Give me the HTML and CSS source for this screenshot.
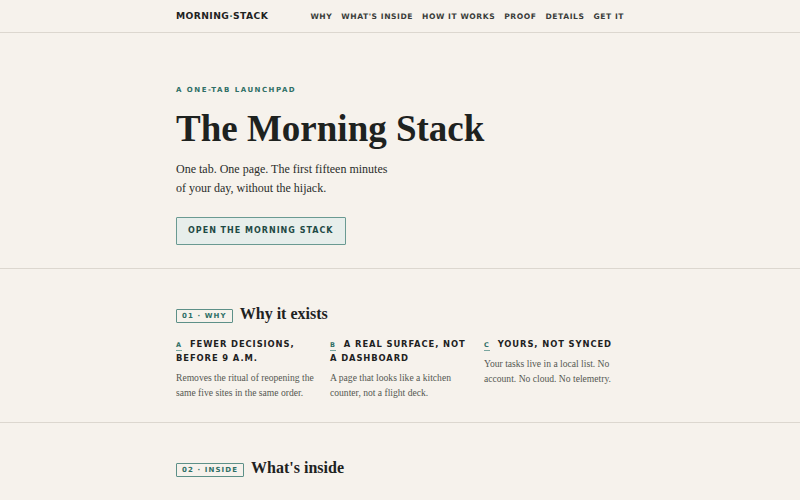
FILE: index.html
```html
<!DOCTYPE html>
<html lang="en">
<head>
    <meta charset="UTF-8">
    <title>The Morning Stack</title>
    <link rel="stylesheet" href="styles.css">
</head>
<body>
    <header class="topbar">
        <div class="wrap topbar-inner">
            <div class="logo">MORNING<span class="dot">·</span>STACK</div>
            <nav class="nav">
                <a href="#why">WHY</a>
                <a href="#inside">WHAT'S INSIDE</a>
                <a href="#how">HOW IT WORKS</a>
                <a href="#proof">PROOF</a>
                <a href="#details">DETAILS</a>
                <a href="#get">GET IT</a>
            </nav>
        </div>
    </header>

    <section class="hero">
        <div class="wrap">
            <p class="eyebrow">A ONE-TAB LAUNCHPAD</p>
            <h1>The Morning Stack</h1>
            <p class="lede">One tab. One page. The first fifteen minutes of your day, without the hijack.</p>
            <a class="btn" href="#get">OPEN THE MORNING STACK</a>
        </div>
    </section>

    <section class="section" id="why">
        <div class="wrap">
            <div class="section-head">
                <span class="tag">01 · WHY</span>
                <h2>Why it exists</h2>
            </div>
            <div class="cols">
                <div class="col">
                    <h3><span class="mark">A</span>FEWER DECISIONS, BEFORE 9 A.M.</h3>
                    <p>Removes the ritual of reopening the same five sites in the same order.</p>
                </div>
                <div class="col">
                    <h3><span class="mark">B</span>A REAL SURFACE, NOT A DASHBOARD</h3>
                    <p>A page that looks like a kitchen counter, not a flight deck.</p>
                </div>
                <div class="col">
                    <h3><span class="mark">C</span>YOURS, NOT SYNCED</h3>
                    <p>Your tasks live in a local list. No account. No cloud. No telemetry.</p>
                </div>
            </div>
        </div>
    </section>

    <section class="section" id="inside">
        <div class="wrap">
            <div class="section-head">
                <span class="tag">02 · INSIDE</span>
                <h2>What's inside</h2>
            </div>
        </div>
    </section>
</body>
</html>
```

FILE: styles.css
```css
body {
    margin: 0;
    background-color: #f6f2ec;
    color: #1e221f;
    font-family: 'Liberation Serif', 'Times New Roman', serif;
}
.wrap {
    width: 448px;
    margin: 0 auto;
}
.topbar {
    border-bottom: 1px solid #dcd7cf;
}
.topbar-inner {
    display: flex;
    align-items: center;
    justify-content: space-between;
    height: 32px;
}
.logo {
    font-family: 'DejaVu Sans', sans-serif;
    font-weight: 700;
    font-size: 9.2px;
    letter-spacing: 0.4px;
    color: #1e221f;
    padding-bottom: 2px;
}
.logo .dot {
    color: #2f6f66;
}
.nav {
    display: flex;
    gap: 9px;
}
.nav a {
    font-family: 'DejaVu Sans', sans-serif;
    font-weight: 700;
    font-size: 7.6px;
    letter-spacing: 0.55px;
    color: #3a3d3a;
    text-decoration: none;
    padding-top: 1px;
}
.hero {
    padding: 53px 0 23px;
    border-bottom: 1px solid #dcd7cf;
}
.eyebrow {
    margin: 0 0 10px;
    font-family: 'DejaVu Sans', sans-serif;
    font-weight: 700;
    font-size: 7px;
    letter-spacing: 1.5px;
    color: #2f6f66;
}
.hero h1 {
    margin: 0 0 6px;
    font-size: 37px;
    line-height: 50px;
    font-weight: 700;
    color: #1e221f;
}
.lede {
    margin: 0 0 19px;
    max-width: 215px;
    font-size: 12px;
    line-height: 19px;
    color: #2a2d2a;
}
.btn {
    display: inline-block;
    padding: 9px 11px;
    font-family: 'DejaVu Sans', sans-serif;
    font-weight: 700;
    font-size: 8px;
    line-height: 8px;
    letter-spacing: 1px;
    color: #1f4a45;
    text-decoration: none;
    background-color: #e7eeeb;
    border: 1px solid #6a9a92;
    border-radius: 1px;
}
.section {
    padding: 36px 0 22px;
    border-bottom: 1px solid #dcd7cf;
}
.section-head {
    display: flex;
    align-items: center;
    gap: 7px;
    margin-bottom: 10px;
}
.tag {
    padding: 2px 5px;
    font-family: 'DejaVu Sans', sans-serif;
    font-weight: 700;
    font-size: 7px;
    line-height: 8px;
    letter-spacing: 1.1px;
    color: #2f6f66;
    border: 1px solid #5d9088;
    border-radius: 1px;
}
.section-head h2 {
    margin: 0;
    padding-bottom: 4px;
    font-size: 16px;
    line-height: 18px;
    font-weight: 700;
    color: #1e221f;
}
.cols {
    display: grid;
    grid-template-columns: 1fr 1fr 1fr;
    gap: 14px;
}
.col h3 {
    margin: 0 0 5px;
    font-family: 'DejaVu Sans', sans-serif;
    font-weight: 700;
    font-size: 8.4px;
    line-height: 14px;
    letter-spacing: 0.9px;
    color: #1e221f;
}
.mark {
    display: inline-block;
    margin-right: 8px;
    padding-bottom: 1px;
    font-size: 6.5px;
    line-height: 7px;
    color: #2f6f66;
    border-bottom: 1px solid #7aa69f;
}
.col p {
    margin: 0;
    font-size: 9.6px;
    line-height: 15px;
    color: #555852;
}
```
